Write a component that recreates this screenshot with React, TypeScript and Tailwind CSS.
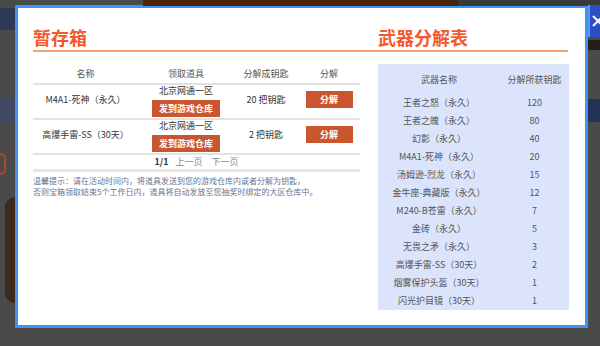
import React from 'react';

const font = { fontFamily: '"Noto Sans CJK SC", "Noto Sans", sans-serif' };

const stored = [
  { name: 'M4A1-死神（永久）', server: '北京网通一区', keys: '20 把钥匙' },
  { name: '高爆手雷-SS（30天）', server: '北京网通一区', keys: '2 把钥匙' },
];

const table = [
  ['王者之怒（永久）', '120'],
  ['王者之魄（永久）', '80'],
  ['幻影（永久）', '40'],
  ['M4A1-死神（永久）', '20'],
  ['汤姆逊-烈龙（永久）', '15'],
  ['金牛座-典藏版（永久）', '12'],
  ['M240-B苍雷（永久）', '7'],
  ['金砖（永久）', '5'],
  ['无畏之矛（永久）', '3'],
  ['高爆手雷-SS（30天）', '2'],
  ['烟雾保护头盔（30天）', '1'],
  ['闪光护目镜（30天）', '1'],
];

export default function App() {
  return (
    <div className="relative w-[600px] h-[346px] overflow-hidden bg-[#4a4a4a]" style={font}>
      {/* page behind the overlay */}
      <div className="absolute left-[143px] top-0 w-[315px] h-[6px] bg-[#4a2609]" />
      <div className="absolute left-[458px] top-0 w-[142px] h-[6px] bg-[#3a3a3c]" />
      <div className="absolute left-0 top-[8px] w-[15px] h-[22px] bg-[#2e3a58]" />
      <div className="absolute left-0 top-[98px] w-[15px] h-[24px] bg-[#414861]" />
      <div className="absolute left-[-6px] top-[153px] w-[12px] h-[22px] rounded-full border-2 border-[#b5412f]" />
      <div className="absolute left-[5px] top-[197px] w-[10px] h-[106px] rounded-l-full bg-[#3b2a1c]" />
      <div className="absolute left-[588px] top-[40px] w-[12px] h-[10px] bg-[#241e17]" />
      <div className="absolute left-[588px] top-[99px] w-[12px] h-[23px] bg-[#233256]" />

      {/* close button */}
      <div className="absolute left-[588px] top-[5px] w-[20px] h-[32px] bg-[#2d4fc4] border-l-2 border-[#5a9af2] flex items-center pl-[2px]">
        <svg width="12" height="12" viewBox="0 0 12 12" fill="none" stroke="white" strokeWidth="2">
          <path d="M1 1 L11 11 M11 1 L1 11" />
        </svg>
      </div>

      <div className="pt-[5px] pl-[15px]">
        <div className="w-[573px] h-[323px] bg-white border-[3px] border-[#3f94f3] pt-[18px] pl-[15px] pr-[17px]">
          {/* titles */}
          <div className="grid grid-cols-[327px_191px] gap-x-[18px] pb-[2px] border-b-2 border-[#f4a36b]">
            <div className="text-[18px] leading-[22px] font-bold text-[#f5582c]">暂存箱</div>
            <div className="text-[18px] leading-[22px] font-bold text-[#f5582c]">武器分解表</div>
          </div>

          <div className="grid grid-cols-[327px_191px] gap-x-[18px] mt-[12px]">
            {/* left: storage box */}
            <div>
              <div className="grid grid-cols-[105px_96px_64px_62px] h-[21px] items-center text-center text-[9px] text-[#555] border-b-2 border-[#e2e2e2]">
                <span>名称</span>
                <span>领取道具</span>
                <span>分解成钥匙</span>
                <span>分解</span>
              </div>
              {stored.map((r) => (
                <div key={r.name} className="grid grid-cols-[105px_96px_64px_62px] h-[35px] text-center text-[9px] text-[#333] border-b-2 border-[#e2e2e2]">
                  <div className="flex items-center justify-center pb-[4px]">{r.name}</div>
                  <div className="flex flex-col items-center">
                    <span className="leading-[12px]">{r.server}</span>
                    <button className="mt-[3px] w-[68px] h-[17px] bg-[#c9562f] text-white text-[9px] font-bold leading-[17px]">
                      发到游戏仓库
                    </button>
                  </div>
                  <div className="flex items-center justify-center pb-[4px]">{r.keys}</div>
                  <div className="flex items-center justify-center pb-[4px]">
                    <button className="w-[47px] h-[17px] bg-[#c9562f] text-white text-[9px] font-bold leading-[17px]">
                      分解
                    </button>
                  </div>
                </div>
              ))}
              <div className="h-[17px] flex items-center justify-center gap-[7px] text-[9px] border-b-[3px] border-[#e6e6e6]">
                <span className="font-bold text-[#333]">1/1</span>
                <span className="text-[#888]">上一页</span>
                <span className="ml-[2px] text-[#888]">下一页</span>
              </div>
              <div className="mt-[3px] text-[8px] leading-[11px] text-[#6a7590]">
                <p>温馨提示：请在活动时间内，将道具发送到您的游戏仓库内或者分解为钥匙，</p>
                <p>否则宝箱领取结束5个工作日内，道具将自动发放至您抽奖时绑定的大区仓库中。</p>
              </div>
            </div>

            {/* right: decomposition table */}
            <div className="bg-[#dbe4fb] h-[246px] pt-[8px] text-[9px] text-[#555]">
              <div className="grid grid-cols-[122px_69px] h-[16px] items-center text-center">
                <span>武器名称</span>
                <span>分解所获钥匙</span>
              </div>
              <div className="mt-[6px]">
                {table.map(([n, v]) => (
                  <div key={n} className="grid grid-cols-[122px_69px] h-[18px] items-center text-center">
                    <span>{n}</span>
                    <span>{v}</span>
                  </div>
                ))}
              </div>
            </div>
          </div>
        </div>
      </div>
    </div>
  );
}
